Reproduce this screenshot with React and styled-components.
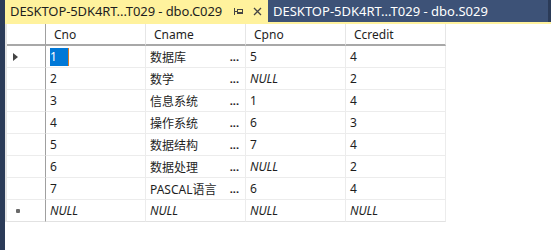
import React from "react";
import styled, { createGlobalStyle } from "styled-components";

const GlobalStyle = createGlobalStyle`
  html, body {
    margin: 0;
    padding: 0;
    background: #ffffff;
    overflow: hidden;
  }
`;

const UI_FONT = `"Noto Sans", "Liberation Sans", "Noto Sans CJK SC", sans-serif`;

const Window = styled.div`
  display: flex;
  width: 551px;
  height: 250px;
  background: #ffffff;
`;

const SideStrip = styled.div`
  width: 5px;
  flex: none;
  background: #2b3b58;
`;

const Main = styled.div`
  flex: 1;
  display: flex;
  flex-direction: column;
  min-width: 0;
`;

const TabBar = styled.div`
  display: flex;
  height: 22px;
  background: #2b3b58;
  border-bottom: 2px solid #fff29d;
`;

const Tab = styled.div`
  display: flex;
  align-items: center;
  width: ${(p) => p.$width}px;
  padding-left: 5px;
  box-sizing: border-box;
  background: ${(p) => (p.$active ? "#fff29d" : "#3d5277")};
  color: ${(p) => (p.$active ? "#1e1e1e" : "#ffffff")};
  font-family: ${UI_FONT};
  font-size: 13px;
  white-space: nowrap;
`;

const TabTitle = styled.span`
  flex: none;
  width: ${(p) => p.$width}px;
  letter-spacing: -0.1px;
`;

const TabIcons = styled.div`
  display: flex;
  align-items: center;
  gap: 9px;
  margin-left: 6px;
`;

const GridArea = styled.div`
  flex: 1;
  display: flex;
  align-items: flex-start;
  font-family: ${UI_FONT};
  font-size: 12px;
  color: #1e1e1e;
`;

const Table = styled.div`
  display: grid;
  grid-template-columns: 39px repeat(4, 100px);
  border-left: 2px solid #e4e4e4;
`;

const HeadCell = styled.div`
  height: 20px;
  display: flex;
  align-items: center;
  padding-left: ${(p) => (p.$selector ? 0 : 8)}px;
  border-right: 1px solid ${(p) => (p.$selector ? "#a0a0a0" : "#e6e6e6")};
  border-bottom: 2px solid #a8a8a8;
  background: #ffffff;
`;

const Cell = styled.div`
  height: 21px;
  display: flex;
  align-items: center;
  justify-content: space-between;
  padding: 0 6px 0 4px;
  border-right: 1px solid ${(p) => (p.$selector ? "#a0a0a0" : "#ececec")};
  border-bottom: 1px solid ${(p) => (p.$last ? "#e2e2e2" : "#ececec")};
  font-style: ${(p) => (p.$null ? "italic" : "normal")};
  white-space: nowrap;
  overflow: hidden;
`;

const SelectorCell = styled(Cell)`
  padding: 0 0 0 6px;
  justify-content: flex-start;
`;

const Arrow = styled.span`
  width: 0;
  height: 0;
  border-top: 4px solid transparent;
  border-bottom: 4px solid transparent;
  border-left: 5px solid #444444;
`;

const NewRowMark = styled.span`
  width: 4px;
  height: 4px;
  margin-left: 3px;
  border-radius: 1px;
  background: #6a6a6a;
`;

const Selected = styled.span`
  display: inline-block;
  width: 18px;
  height: 18px;
  line-height: 18px;
  background: #0078d7;
  color: #ffffff;
  border-right: 1px solid #d27b2a;
`;

const Ellipsis = styled.span`
  font-weight: bold;
  font-size: 11px;
  letter-spacing: 0;
  color: #1e1e1e;
`;

const PinIcon = () => (
  <svg width="10" height="9" viewBox="0 0 10 9">
    <path d="M0.5 1v7" stroke="#444" strokeWidth="1" />
    <path d="M0.5 4.5h3" stroke="#444" strokeWidth="1" />
    <rect x="3.5" y="2.5" width="5" height="4" fill="none" stroke="#444" strokeWidth="1" />
    <path d="M3.5 5.5h5" stroke="#444" strokeWidth="1" />
  </svg>
);

const CloseIcon = () => (
  <svg width="9" height="9" viewBox="0 0 9 9">
    <path d="M1 1l7 7M8 1l-7 7" stroke="#444" strokeWidth="1.3" />
  </svg>
);

const rows = [
  ["1", "数据库", "5", "4"],
  ["2", "数学", null, "2"],
  ["3", "信息系统", "1", "4"],
  ["4", "操作系统", "6", "3"],
  ["5", "数据结构", "7", "4"],
  ["6", "数据处理", null, "2"],
  ["7", "PASCAL语言", "6", "4"],
];

export default function App() {
  return (
    <Window>
      <GlobalStyle />
      <SideStrip />
      <Main>
        <TabBar>
          <Tab $active $width={263}>
            <TabTitle $width={218}>DESKTOP-5DK4RT...T029 - dbo.C029</TabTitle>
            <TabIcons>
              <PinIcon />
              <CloseIcon />
            </TabIcons>
          </Tab>
          <Tab $width={280}>DESKTOP-5DK4RT...T029 - dbo.S029</Tab>
        </TabBar>
        <GridArea>
          <Table>
            <HeadCell $selector />
            <HeadCell>Cno</HeadCell>
            <HeadCell>Cname</HeadCell>
            <HeadCell>Cpno</HeadCell>
            <HeadCell>Ccredit</HeadCell>
            {rows.map((r, i) => (
              <React.Fragment key={i}>
                <SelectorCell $selector>{i === 0 && <Arrow />}</SelectorCell>
                <Cell>{i === 0 ? <Selected>{r[0]}</Selected> : <span>{r[0]}</span>}</Cell>
                <Cell>
                  <span>{r[1]}</span>
                  <Ellipsis>...</Ellipsis>
                </Cell>
                <Cell $null={r[2] === null}>{r[2] === null ? "NULL" : r[2]}</Cell>
                <Cell>{r[3]}</Cell>
              </React.Fragment>
            ))}
            <SelectorCell $selector $last>
              <NewRowMark />
            </SelectorCell>
            <Cell $null $last>NULL</Cell>
            <Cell $null $last>NULL</Cell>
            <Cell $null $last>NULL</Cell>
            <Cell $null $last>NULL</Cell>
          </Table>
        </GridArea>
      </Main>
    </Window>
  );
}
